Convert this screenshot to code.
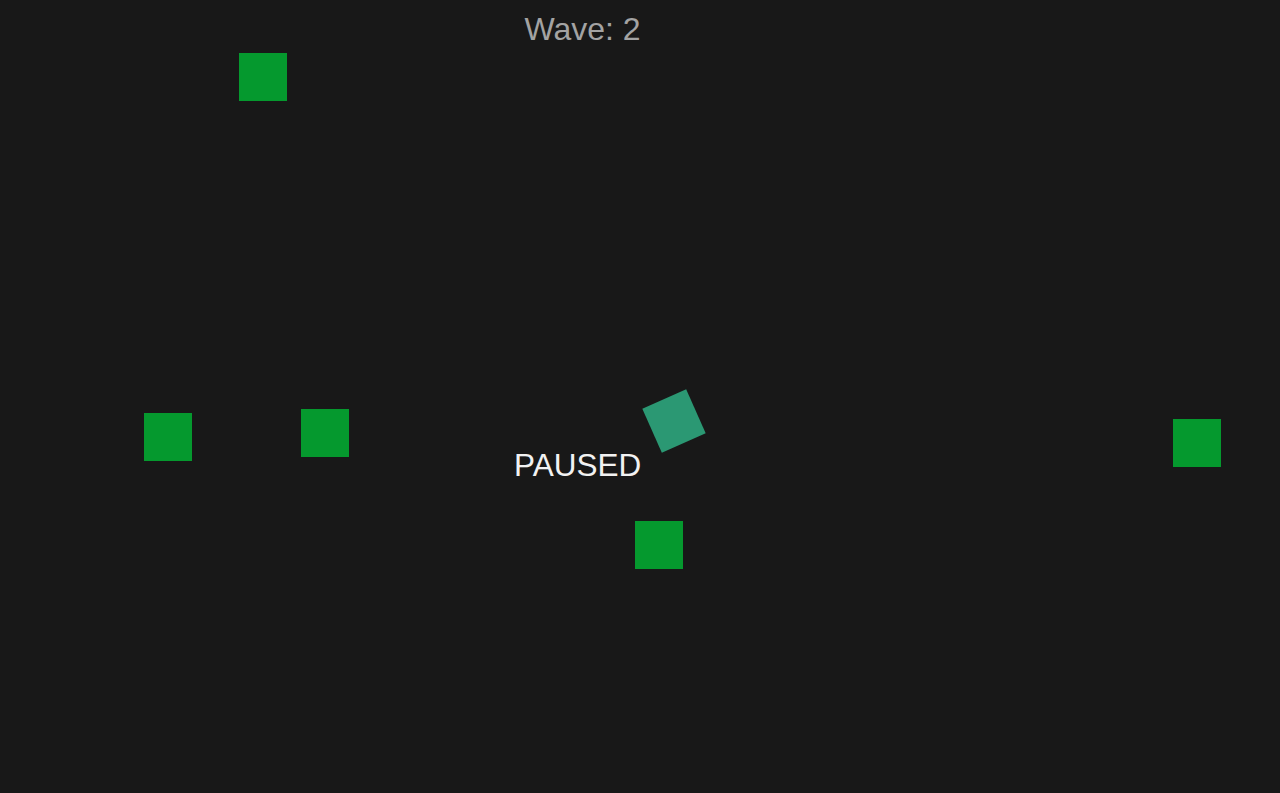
export default function App() {
  const squares = [
    [239, 53],
    [144, 413],
    [301, 409],
    [1173, 419],
    [635, 521],
  ];
  return (
    <div className="relative w-[1280px] h-[793px] overflow-hidden bg-[#181818]" style={{ fontFamily: '"Liberation Sans", Arial, sans-serif' }}>
      <div className="absolute left-0 top-[13px] w-[1165px] text-center text-[32px] leading-[32px] text-[#a3a3a3]">Wave: 2</div>
      {squares.map(([x, y], i) => (
        <div key={i} className="absolute w-[48px] h-[48px] bg-[#05992e]" style={{ left: x, top: y }} />
      ))}
      <div className="absolute left-[650px] top-[397px] w-[48px] h-[48px] bg-[#2b9873] rotate-[-24deg]" />
      <div className="absolute left-[514px] top-[449px] text-[31.5px] leading-[32px] text-[#f2f2f2]">PAUSED</div>
    </div>
  );
}
